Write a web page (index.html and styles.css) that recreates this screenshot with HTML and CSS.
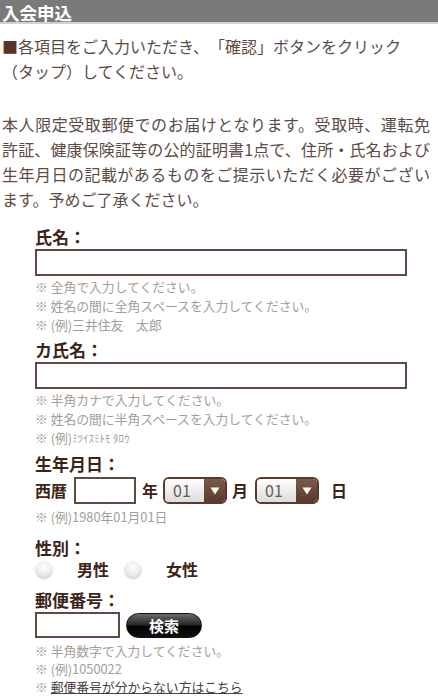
FILE: index.html
```html
<!DOCTYPE html>
<html lang="ja">
<head>
<meta charset="utf-8">
<title>入会申込</title>
<link rel="stylesheet" href="styles.css">
</head>
<body>
<h1 class="hdr">入会申込</h1>
<p class="intro"><span class="mark">■</span>各項目をご入力いただき、「確認」ボタンをクリック<br>（タップ）してください。</p>
<p class="intro intro2">
<span class="jl">本人限定受取郵便でのお届けとなります。受取時、運転免</span>
<span class="jl">許証、健康保険証等の公的証明書1点で、住所・氏名および</span>
<span class="jl">生年月日の記載があるものをご提示いただく必要がござい</span>
<span class="ln">ます。予めご了承ください。</span>
</p>

<form class="form">
  <div class="field">
    <div class="label">氏名：</div>
    <div class="input full"></div>
    <ul class="notes">
      <li>※ 全角で入力してください。</li>
      <li>※ 姓名の間に全角スペースを入力してください。</li>
      <li>※ (例)三井住友　太郎</li>
    </ul>
  </div>

  <div class="field">
    <div class="label">カ氏名：</div>
    <div class="input full"></div>
    <ul class="notes">
      <li>※ 半角カナで入力してください。</li>
      <li>※ 姓名の間に半角スペースを入力してください。</li>
      <li>※ (例)<span class="hk">ﾐﾂｲｽﾐﾄﾓ ﾀﾛｳ</span></li>
    </ul>
  </div>

  <div class="field">
    <div class="label">生年月日：</div>
    <div class="daterow">
      <span>西暦</span>
      <div class="input year"></div>
      <span>年</span>
      <div class="sel"><span class="val">01</span><span class="arr"><svg width="10" height="8" viewBox="0 0 10 8"><path d="M0.5 0.5 H9.5 L5 7.5 Z" fill="#fff"/></svg></span></div>
      <span>月</span>
      <div class="sel sel-last"><span class="val">01</span><span class="arr"><svg width="10" height="8" viewBox="0 0 10 8"><path d="M0.5 0.5 H9.5 L5 7.5 Z" fill="#fff"/></svg></span></div>
      <span>日</span>
    </div>
    <ul class="notes notes-date">
      <li>※ (例)1980年01月01日</li>
    </ul>
  </div>

  <div class="field gap">
    <div class="label">性別：</div>
    <div class="radios">
      <span class="radio"></span><span class="rlabel">男性</span>
      <span class="radio"></span><span class="rlabel">女性</span>
    </div>
  </div>

  <div class="field gap2">
    <div class="label">郵便番号：</div>
    <div class="ziprow">
      <div class="input zip"></div>
      <span class="btn">検索</span>
    </div>
    <ul class="notes notes2">
      <li>※ 半角数字で入力してください。</li>
      <li>※ (例)1050022</li>
      <li>※ <a class="link" href="#">郵便番号が分からない方はこちら</a></li>
    </ul>
  </div>
</form>
</body>
</html>
```

FILE: styles.css
```css
html, body {
  margin: 0;
  padding: 0;
  background: #fff;
}

body {
  font-family: "Noto Sans CJK JP", "Noto Sans", sans-serif;
  color: #5c4c44;
  text-spacing-trim: space-all;
}

.hdr {
  margin: 0;
  padding: 3px 0 0 2px;
  line-height: 19px;
  background: #7a7a7a;
  border-bottom: 2px solid #d2d2d2;
  color: #fff;
  font-size: 17.5px;
  font-weight: bold;
}

.intro {
  margin: 10px 0 0;
  padding: 0 2px;
  width: 428px;
  font-size: 16px;
  line-height: 25px;
}

.intro2 {
  margin-top: 28px;
}

.mark {
  color: #5a3424;
}

.jl {
  display: block;
  text-align: justify;
  text-align-last: justify;
}

.ln {
  display: block;
}

.form {
  margin: 13px 0 0;
  padding: 0 0 0 35px;
  width: 372px;
}

.field {
  margin-top: 4px;
}

.field.gap {
  margin-top: 10px;
}

.field.gap2 {
  margin-top: 9px;
}

.label {
  font-size: 17px;
  font-weight: bold;
  line-height: 24px;
  color: #3d2418;
}

.input {
  box-sizing: border-box;
  height: 27px;
  border: 2px solid #5e4a40;
  background: #fff;
}

.input.full {
  width: 372px;
}

.notes {
  list-style: none;
  margin: 1px 0 0;
  padding: 0;
  font-size: 12.8px;
  line-height: 19px;
  color: #a39d99;
}

.notes-date {
  margin-top: 3px;
}

.notes2 {
  margin-top: 4px;
  line-height: 18px;
}

.hk {
  font-size: 11px;
}

.link {
  color: #4a4040;
  text-decoration: underline;
}

.daterow {
  display: flex;
  align-items: center;
  height: 27px;
  margin-top: 1px;
  font-size: 16px;
  font-weight: bold;
  color: #3d2418;
}

.daterow > span {
  line-height: 27px;
}

.input.year {
  width: 62px;
  margin: 0 6px 0 7px;
}

.sel {
  box-sizing: border-box;
  display: flex;
  width: 64px;
  height: 27px;
  margin: 0 5px 0 5px;
  border: 2px solid #5a3a2c;
  border-radius: 6px;
  overflow: hidden;
}

.sel.sel-last {
  margin: 0 12px 0 7px;
}

.sel .val {
  flex: 1;
  padding-left: 8px;
  background: linear-gradient(#ffffff, #dcdcdc);
  font-size: 16px;
  font-weight: normal;
  line-height: 23px;
  color: #6a5a52;
}

.sel .arr {
  width: 21px;
  display: flex;
  align-items: center;
  justify-content: center;
  background: linear-gradient(#7a5a4a, #5a3a2c);
}

.radios {
  display: flex;
  align-items: center;
  height: 19px;
  font-size: 16px;
  font-weight: bold;
  color: #3d2418;
}

.radio {
  width: 18px;
  height: 18px;
  border-radius: 50%;
  background: radial-gradient(circle at 50% 35%, #ffffff 0%, #eeeeee 45%, #c8c8c8 100%);
  box-shadow: 0 1px 1px rgba(0,0,0,0.08);
}

.rlabel {
  margin: 0 15px 0 24px;
  line-height: 19px;
}

.ziprow {
  display: flex;
  align-items: center;
  gap: 6px;
}

.input.zip {
  width: 85px;
  height: 26px;
}

.btn {
  box-sizing: border-box;
  width: 76px;
  height: 25px;
  border-radius: 13px;
  border: 1px solid #111;
  background: linear-gradient(#6a6a6a 0%, #2a2a2a 45%, #000 55%, #111 100%);
  color: #fff;
  font-size: 15px;
  font-weight: bold;
  line-height: 23px;
  text-align: center;
}
```
